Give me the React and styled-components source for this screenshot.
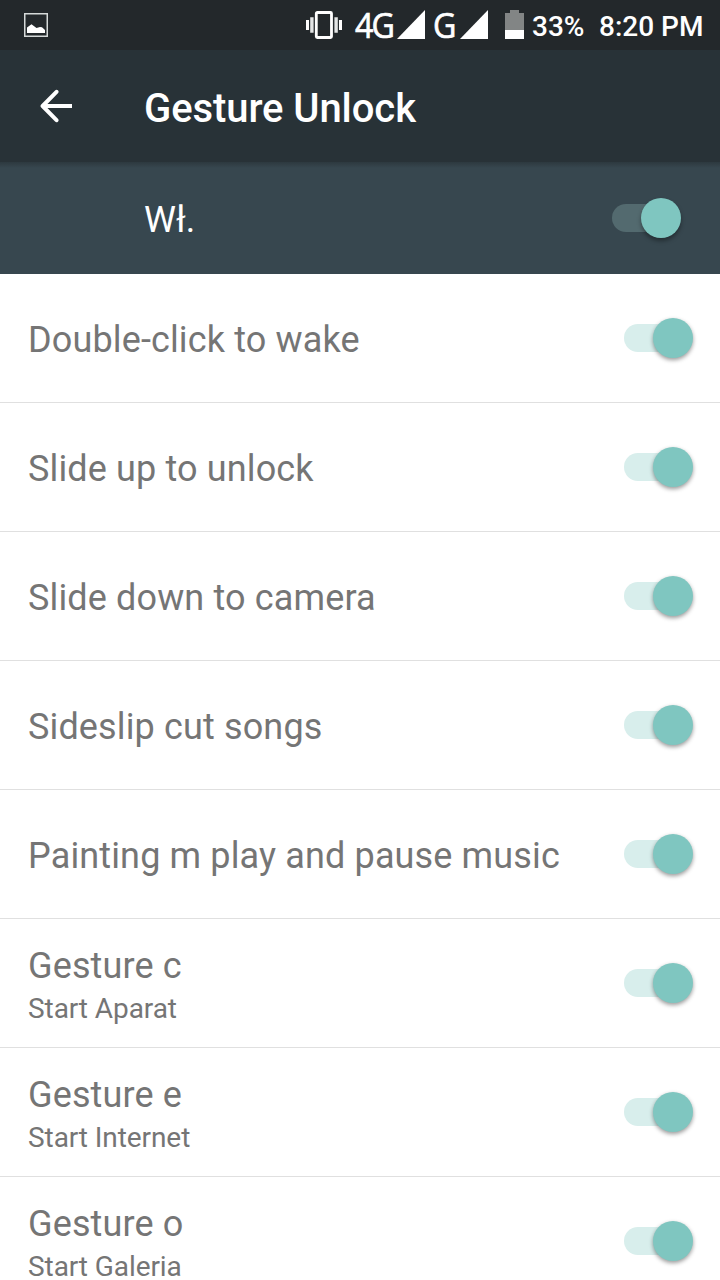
import React, { Component } from "react";
import styled, { createGlobalStyle } from "styled-components";

const gestures = [
    { title: "Double-click to wake" },
    { title: "Slide up to unlock" },
    { title: "Slide down to camera" },
    { title: "Sideslip cut songs" },
    { title: "Painting m play and pause music" },
    { title: "Gesture c", action: "Start Aparat" },
    { title: "Gesture e", action: "Start Internet" },
    { title: "Gesture o", action: "Start Galeria" },
];

export default class App extends Component {
    render() {
        return (
            <Screen>
                <GlobalStyle />
                <StatusBar />
                <Toolbar>
                    <BackIcon viewBox="0 0 34 34">
                        <path d="M33 17H5" />
                        <path d="M17.5 2.8L3.6 17L17.5 31.2" strokeLinecap="round" strokeLinejoin="round" />
                    </BackIcon>
                    <Title>Gesture Unlock</Title>
                </Toolbar>
                <MasterRow>
                    <MasterLabel>Wł.</MasterLabel>
                    <Switch dark />
                </MasterRow>
                <List>
                    {gestures.map(item => (
                        <Row key={item.title}>
                            <div>
                                <RowTitle>{item.title}</RowTitle>
                                {item.action && <RowAction>{item.action}</RowAction>}
                            </div>
                            <Switch />
                        </Row>
                    ))}
                </List>
            </Screen>
        );
    }
}

function StatusBar() {
    return (
        <StatusWrapper>
            <PictureIcon viewBox="0 0 24 24">
                <rect x="0.75" y="0.75" width="22.5" height="22.5" fill="none" stroke="#d5d9d9" strokeWidth="1.5" />
                <path d="M3 20V14.5L7.5 11.3L12.5 15L16 14L18 14.3L21 17V20Z" fill="#fff" />
            </PictureIcon>
            <VibrateIcon viewBox="0 0 36 28">
                <rect x="10.3" y="1.5" width="15.2" height="25" rx="1" fill="none" stroke="#fff" strokeWidth="2.8" />
                <path d="M0 9H3V19H0ZM33 9H36V19H33Z" fill="#fff" />
                <path d="M4.2 6.3H7.6V21.7H4.2ZM28.4 6.3H31.8V21.7H28.4Z" fill="#e3e5e5" />
            </VibrateIcon>
            <Network $width={42}>4G</Network>
            <SignalIcon viewBox="0 0 28 29"><path d="M0 29L28 0V29Z" /></SignalIcon>
            <Network $width={27}>G</Network>
            <SignalIcon viewBox="0 0 28 29"><path d="M0 29L28 0V29Z" /></SignalIcon>
            <BatteryIcon viewBox="0 0 19 29">
                <path d="M5 0H14V3H19V20H0V3H5Z" fill="#828585" />
                <path d="M0 20H19V29H0Z" fill="#fff" />
            </BatteryIcon>
            <Percent>33%</Percent>
            <Clock>8:20 PM</Clock>
        </StatusWrapper>
    );
}

function Switch({ dark }) {
    return (
        <Track $dark={dark}>
            <Thumb $dark={dark} />
        </Track>
    );
}

const GlobalStyle = createGlobalStyle`
    * {
        box-sizing: border-box;
    }
    html, body {
        margin: 0;
        height: 1280px;
        overflow: hidden;
    }
`;

const Screen = styled.div`
    width: 720px;
    height: 1280px;
    overflow: hidden;
    background: #fff;
    font-family: Roboto, sans-serif;
    white-space: nowrap;
`;

const StatusWrapper = styled.div`
    display: flex;
    align-items: flex-start;
    height: 50px;
    padding-left: 24px;
    background: #23282b;
    color: #fff;
`;

const PictureIcon = styled.svg`
    width: 24px;
    height: 24px;
    margin-top: 13px;
`;

const VibrateIcon = styled.svg`
    width: 36px;
    height: 28px;
    margin: 11px 13px 0 258px;
`;

const Network = styled.span`
    width: ${props => props.$width}px;
    font-family: "Open Sans", "Noto Sans", sans-serif;
    font-size: 35px;
    line-height: 50px;
    letter-spacing: -2px;
    -webkit-text-stroke: 0.7px #fff;
    transform: scaleX(0.92);
    transform-origin: left;
`;

const SignalIcon = styled.svg`
    width: 28px;
    height: 29px;
    margin: 10px 8px 0 0;
    fill: #fff;
`;

const BatteryIcon = styled.svg`
    width: 19px;
    height: 29px;
    margin: 10px 8px 0 9px;
`;

const Percent = styled.span`
    width: 67px;
    font-size: 28px;
    font-weight: 500;
    line-height: 53px;
`;

const Clock = styled(Percent)`
    width: auto;
`;

const Toolbar = styled.header`
    display: flex;
    align-items: center;
    height: 112px;
    padding-left: 39px;
    background: #283237;
`;

const BackIcon = styled.svg`
    width: 34px;
    height: 34px;
    margin-right: 71px;
    fill: none;
    stroke: #fff;
    stroke-width: 4;
`;

const Title = styled.h1`
    margin: 6px 0 0;
    color: #fff;
    font-size: 40px;
    font-weight: 500;
    line-height: 48px;
    letter-spacing: -0.08px;
`;

const MasterRow = styled.div`
    display: flex;
    align-items: center;
    justify-content: space-between;
    height: 112px;
    padding: 0 40px 0 144px;
    background: linear-gradient(#2d393f, #37474f 6px);
`;

const MasterLabel = styled.span`
    padding-top: 4px;
    color: #fff;
    font-size: 36px;
`;

const List = styled.ul`
    margin: 0;
    padding: 0;
    list-style: none;
`;

const Row = styled.li`
    display: flex;
    align-items: center;
    justify-content: space-between;
    height: 129px;
    padding: 0 28px;
    border-bottom: 1px solid #e0e0e0;
    color: #757575;
`;

const RowTitle = styled.div`
    padding-top: 4px;
    font-size: 36px;
    line-height: 42px;
    letter-spacing: 0.14px;
`;

const RowAction = styled.div`
    margin-bottom: 2px;
    padding-top: 8px;
    font-size: 28px;
    line-height: 28px;
    letter-spacing: -0.08px;
`;

const Track = styled.div`
    display: flex;
    align-items: center;
    justify-content: flex-end;
    flex: none;
    width: 68px;
    height: 28px;
    border-radius: 14px;
    background: ${props => (props.$dark ? "#536a6f" : "#d8eeec")};
`;

const Thumb = styled.span`
    width: 40px;
    height: 40px;
    flex: none;
    margin-right: -1px;
    border-radius: 50%;
    background: #7fc6c0;
    box-shadow: ${props => (props.$dark ? "0 3px 4px rgba(0, 0, 0, 0.35)" : "0 2px 4px rgba(0, 0, 0, 0.4)")};
`;
